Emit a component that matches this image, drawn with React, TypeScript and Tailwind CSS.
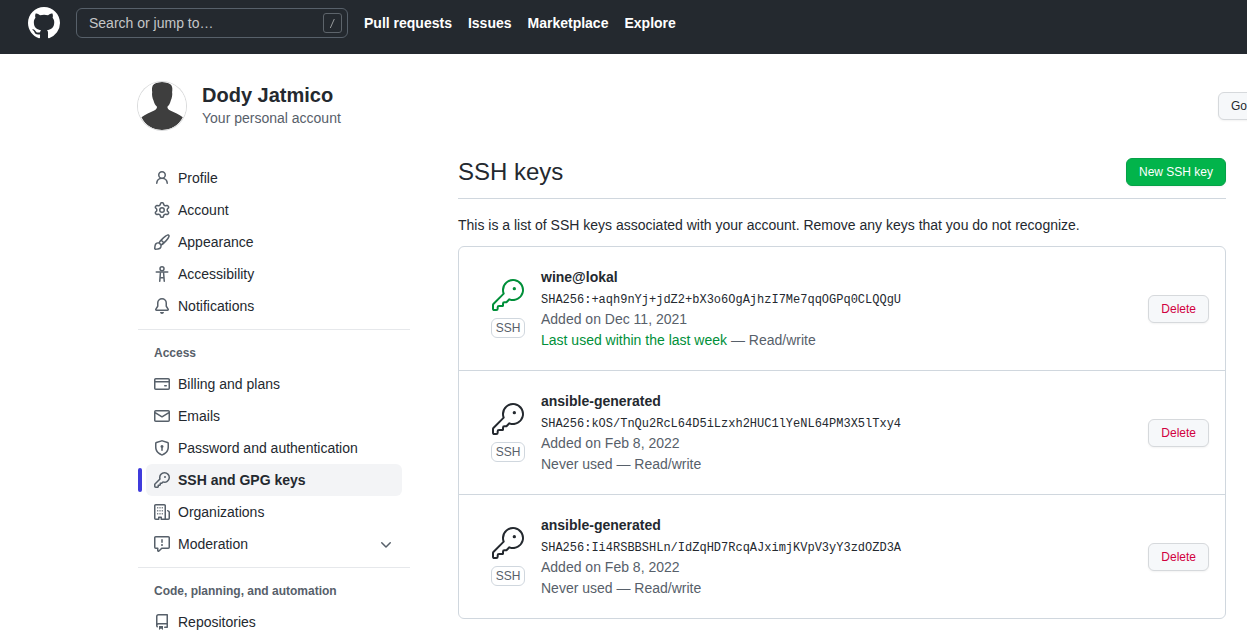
import React from "react";

type IconProps = { paths: string[]; size?: 16 | 24; className?: string };

function Icon({ paths, size = 16, className = "size-4" }: IconProps) {
  return (
    <svg viewBox={size === 24 ? "0 0 24 24" : "0 0 16 16"} fill="currentColor" fillRule="evenodd" aria-hidden="true" className={`shrink-0 ${className}`}>
      {paths.map((d) => (
        <path key={d} d={d} />
      ))}
    </svg>
  );
}

const icons = {
  mark: ["M8 0C3.58 0 0 3.58 0 8c0 3.54 2.29 6.53 5.47 7.59.4.07.55-.17.55-.38 0-.19-.01-.82-.01-1.49-2.01.37-2.53-.49-2.69-.94-.09-.23-.48-.94-.82-1.13-.28-.15-.68-.52-.01-.53.63-.01 1.08.58 1.23.82.72 1.21 1.87.87 2.33.66.07-.52.28-.87.51-1.07-1.78-.2-3.64-.89-3.64-3.95 0-.87.31-1.59.82-2.15-.08-.2-.36-1.02.08-2.12 0 0 .67-.21 2.2.82.64-.18 1.32-.27 2-.27.68 0 1.36.09 2 .27 1.53-1.04 2.2-.82 2.2-.82.44 1.1.16 1.92.08 2.12.51.56.82 1.27.82 2.15 0 3.07-1.87 3.75-3.65 3.95.29.25.54.73.54 1.48 0 1.07-.01 1.93-.01 2.2 0 .21.15.46.55.38A8.013 8.013 0 0016 8c0-4.42-3.58-8-8-8z"],
  person: ["M10.5 5a2.5 2.5 0 11-5 0 2.5 2.5 0 015 0zm.061 3.073a4 4 0 10-5.123 0 6.004 6.004 0 00-3.431 5.142.75.75 0 001.498.07 4.5 4.5 0 018.99 0 .75.75 0 101.498-.07 6.005 6.005 0 00-3.432-5.142z"],
  gear: ["M7.429 1.525a6.593 6.593 0 011.142 0c.036.003.108.036.137.146l.289 1.105c.147.56.55.967.997 1.189.174.086.341.183.501.29.417.278.97.423 1.53.27l1.102-.303c.11-.03.175.016.195.046.219.31.41.641.573.989.014.031.022.11-.059.19l-.815.806c-.411.406-.562.957-.53 1.456a4.588 4.588 0 010 .582c-.032.499.119 1.05.53 1.456l.815.806c.08.08.073.159.059.19a6.494 6.494 0 01-.573.99c-.02.029-.086.074-.195.045l-1.103-.303c-.559-.153-1.112-.008-1.529.27-.16.107-.327.204-.5.29-.449.222-.851.628-.998 1.189l-.289 1.105c-.029.11-.101.143-.137.146a6.613 6.613 0 01-1.142 0c-.036-.003-.108-.037-.137-.146l-.289-1.105c-.147-.56-.55-.967-.997-1.189a4.502 4.502 0 01-.501-.29c-.417-.278-.97-.423-1.53-.27l-1.102.303c-.11.03-.175-.016-.195-.046a6.492 6.492 0 01-.573-.989c-.014-.031-.022-.11.059-.19l.815-.806c.411-.406.562-.957.53-1.456a4.587 4.587 0 010-.582c.032-.499-.119-1.05-.53-1.456l-.815-.806c-.08-.08-.073-.159-.059-.19a6.44 6.44 0 01.573-.99c.02-.029.086-.075.195-.045l1.103.303c.559.153 1.112.008 1.529-.27.16-.107.327-.204.5-.29.449-.222.851-.628.998-1.189l.289-1.105c.029-.11.101-.143.137-.146zM8 0c-.236 0-.47.01-.701.03-.743.065-1.29.615-1.458 1.261l-.29 1.106c-.017.066-.078.158-.211.224a5.994 5.994 0 00-.668.386c-.123.082-.233.09-.3.071L3.27 2.776c-.644-.177-1.392.02-1.82.63a7.977 7.977 0 00-.704 1.217c-.315.675-.111 1.422.363 1.891l.815.806c.05.048.098.147.088.294a6.084 6.084 0 000 .772c.01.147-.038.246-.088.294l-.815.806c-.474.469-.678 1.216-.363 1.891.2.428.436.835.704 1.218.428.609 1.176.806 1.82.63l1.103-.303c.066-.019.176-.011.299.071.213.143.436.272.668.386.133.066.194.158.212.224l.289 1.106c.169.646.715 1.196 1.458 1.26a8.094 8.094 0 001.402 0c.743-.064 1.29-.614 1.458-1.26l.29-1.106c.017-.066.078-.158.211-.224a5.98 5.98 0 00.668-.386c.123-.082.233-.09.3-.071l1.102.302c.644.177 1.392-.02 1.82-.63.268-.382.505-.789.704-1.217.315-.675.111-1.422-.364-1.891l-.814-.806c-.05-.048-.098-.147-.088-.294a6.1 6.1 0 000-.772c-.01-.147.039-.246.088-.294l.814-.806c.475-.469.679-1.216.364-1.891a7.992 7.992 0 00-.704-1.218c-.428-.609-1.176-.806-1.82-.63l-1.103.303c-.066.019-.176.011-.299-.071a5.991 5.991 0 00-.668-.386c-.133-.066-.194-.158-.212-.224L10.16 1.29C9.99.645 9.444.095 8.701.031A8.094 8.094 0 008 0zm1.5 8a1.5 1.5 0 11-3 0 1.5 1.5 0 013 0zM11 8a3 3 0 11-6 0 3 3 0 016 0z"],
  brush: ["M11.134 1.535C9.722 2.562 8.16 4.057 6.889 5.312 5.8 6.387 5.041 7.401 4.575 8.294a3.745 3.745 0 00-3.227 1.054c-.43.431-.69 1.066-.86 1.657a11.982 11.982 0 00-.358 1.914A21.263 21.263 0 000 15.203v.054l.75-.007-.007.75h.054a14.404 14.404 0 00.654-.012 21.243 21.243 0 001.63-.118c.62-.07 1.3-.18 1.914-.357.592-.17 1.226-.43 1.657-.861a3.745 3.745 0 001.055-3.217c.908-.461 1.942-1.216 3.04-2.3 1.279-1.262 2.764-2.825 3.775-4.249.501-.706.923-1.428 1.125-2.096.2-.659.235-1.469-.368-2.07-.606-.607-1.42-.55-2.069-.34-.66.213-1.376.646-2.076 1.155zm-3.95 8.48a3.76 3.76 0 00-1.19-1.192 9.758 9.758 0 011.161-1.607l1.658 1.658a9.853 9.853 0 01-1.63 1.142zM12.016 2.749c-1.224.89-2.605 2.189-3.822 3.384l1.718 1.718c1.21-1.205 2.51-2.597 3.387-3.833.47-.662.78-1.227.912-1.662.134-.444.032-.551.009-.575h-.001V1.78c-.014-.014-.112-.113-.548.027-.432.14-.995.462-1.655.942zM1.62 13.089a19.56 19.56 0 00-.104 1.395 19.55 19.55 0 001.396-.104 10.528 10.528 0 001.668-.309c.526-.151.856-.325 1.011-.48a2.25 2.25 0 00-3.182-3.182c-.155.155-.329.485-.48 1.01a10.515 10.515 0 00-.309 1.67z"],
  accessibility: [
    "M8 0a2.75 2.75 0 110 5.5A2.75 2.75 0 018 0zm0 1.5a1.25 1.25 0 100 2.5 1.25 1.25 0 000-2.5z",
    "M2.25 5.25h11.5a.75.75 0 010 1.5H2.25a.75.75 0 010-1.5z",
    "M5.7 6.25h1.5l-.7 9.05a.75.75 0 01-1.5-.1z",
    "M10.3 6.25H8.8l.7 9.05a.75.75 0 001.5-.1z",
    "M6.200 11h3.600v1.500h-3.600z",
  ],
  bell: [
    "M8 16a2 2 0 001.985-1.75c.017-.137-.097-.25-.235-.25h-3.5c-.138 0-.252.113-.235.25A2 2 0 008 16z",
    "M8 1.5A3.5 3.5 0 004.5 5v2.947c0 .346-.102.683-.294.97l-1.703 2.556a.018.018 0 00-.003.01l.001.006c0 .002.002.004.004.006a.017.017 0 00.006.004l.007.001h10.964l.007-.001a.016.016 0 00.006-.004.016.016 0 00.004-.006l.001-.007a.017.017 0 00-.003-.01l-1.703-2.554a1.75 1.75 0 01-.294-.97V5A3.5 3.5 0 008 1.5zM3 5a5 5 0 0110 0v2.947c0 .05.015.098.042.139l1.703 2.555A1.518 1.518 0 0113.482 13H2.518a1.518 1.518 0 01-1.263-2.36l1.703-2.554A.25.25 0 003 7.947V5z",
  ],
  card: [
    "M10.75 9a.75.75 0 000 1.5h1.5a.75.75 0 000-1.5h-1.5z",
    "M0 3.75C0 2.784.784 2 1.75 2h12.5c.966 0 1.75.784 1.75 1.75v8.5A1.75 1.75 0 0114.25 14H1.75A1.75 1.75 0 010 12.25v-8.5zm14.5 0V5h-13V3.75a.25.25 0 01.25-.25h12.5a.25.25 0 01.25.25zm0 2.75h-13v5.75c0 .138.112.25.25.25h12.5a.25.25 0 00.25-.25V6.5z",
  ],
  mail: ["M1.75 2A1.75 1.75 0 000 3.75v8.5C0 13.216.784 14 1.75 14h12.5A1.75 1.75 0 0016 12.25v-8.5A1.75 1.75 0 0014.25 2H1.75zM14.5 4.07v-.32a.25.25 0 00-.25-.25H1.75a.25.25 0 00-.25.25v.32L8 7.88l6.5-3.81zm-13 1.74v6.441c0 .138.112.25.25.25h12.5a.25.25 0 00.25-.25V5.809L8.38 9.397a.75.75 0 01-.76 0L1.5 5.809z"],
  shield: ["M7.467.133a1.75 1.75 0 011.066 0l5.25 1.68A1.75 1.75 0 0115 3.48V7c0 1.566-.32 3.182-1.303 4.682-.983 1.498-2.585 2.813-5.032 3.855a1.7 1.7 0 01-1.33 0c-2.447-1.042-4.049-2.357-5.032-3.855C1.32 10.182 1 8.566 1 7V3.48a1.75 1.75 0 011.217-1.667l5.25-1.68zm.61 1.429a.25.25 0 00-.153 0l-5.25 1.68a.25.25 0 00-.174.238V7c0 1.358.275 2.666 1.057 3.86.784 1.194 2.121 2.34 4.366 3.297a.2.2 0 00.154 0c2.245-.956 3.582-2.104 4.366-3.298C13.225 9.666 13.5 8.36 13.5 7V3.48a.25.25 0 00-.174-.237l-5.25-1.68zM9.5 6.5a1.5 1.5 0 01-.75 1.3v2.45a.75.75 0 01-1.5 0V7.8A1.5 1.5 0 119.5 6.5z"],
  key: ["M6.5 5.5a4 4 0 112.731 3.795.75.75 0 00-.768.18L7.44 10.5H6.25a.75.75 0 00-.75.75v1.19l-.06.06H4.25a.75.75 0 00-.75.75v1.19l-.06.06H1.75a.25.25 0 01-.25-.25v-1.69l5.024-5.023a.75.75 0 00.181-.768A3.995 3.995 0 016.5 5.5zm4-5.5a5.5 5.5 0 00-5.348 6.788L.22 11.72a.75.75 0 00-.22.53v2C0 15.216.784 16 1.75 16h2a.75.75 0 00.53-.22l.5-.5a.75.75 0 00.22-.53V14h.75a.75.75 0 00.53-.22l.5-.5a.75.75 0 00.22-.53V12h.75a.75.75 0 00.53-.22l.932-.932A5.5 5.5 0 1010.5 0zm.5 6a1 1 0 100-2 1 1 0 000 2z"],
  organization: ["M1.5 14.25c0 .138.112.25.25.25H4v-1.25a.75.75 0 01.75-.75h2.5a.75.75 0 01.75.75v1.25h2.25a.25.25 0 00.25-.25V1.75a.25.25 0 00-.25-.25h-8.5a.25.25 0 00-.25.25v12.5zM1.75 16A1.75 1.75 0 010 14.25V1.75C0 .784.784 0 1.75 0h8.5C11.216 0 12 .784 12 1.75v12.5c0 .085-.006.168-.018.25h2.268a.25.25 0 00.25-.25V8.285a.25.25 0 00-.111-.208l-1.055-.703a.75.75 0 11.832-1.248l1.055.703c.487.325.779.871.779 1.456v5.965A1.75 1.75 0 0114.25 16h-3.5a.75.75 0 01-.197-.026c-.099.017-.2.026-.303.026h-3a.75.75 0 01-.75-.75V14h-1v1.25a.75.75 0 01-.75.75h-3z",
    "M3.25 3h1v1.5h-1zM5.5 3h1v1.5h-1zM7.75 3h1v1.5h-1zM3.25 6h1v1.5h-1zM5.5 6h1v1.5h-1zM7.75 6h1v1.5h-1zM3.25 9h1v1.5h-1zM5.5 9h1v1.5h-1zM7.75 9h1v1.5h-1z"],
  report: ["M1.75 1.5a.25.25 0 00-.25.25v9.5c0 .138.112.25.25.25h2a.75.75 0 01.75.75v2.19l2.72-2.72a.75.75 0 01.53-.22h6.5a.25.25 0 00.25-.25v-9.5a.25.25 0 00-.25-.25H1.75zM0 1.75C0 .784.784 0 1.75 0h12.5C15.216 0 16 .784 16 1.75v9.5A1.75 1.75 0 0114.25 13H8.06l-2.573 2.573A1.457 1.457 0 013 14.543V13H1.75A1.75 1.75 0 010 11.25v-9.5zM9 9a1 1 0 11-2 0 1 1 0 012 0zm-.25-5.25a.75.75 0 00-1.5 0v2.5a.75.75 0 001.5 0v-2.5z"],
  repo: ["M2 2.5A2.5 2.5 0 014.5 0h8.75a.75.75 0 01.75.75v12.5a.75.75 0 01-.75.75h-2.5a.75.75 0 110-1.5h1.75v-2h-8a1 1 0 00-.714 1.7.75.75 0 01-1.072 1.05A2.495 2.495 0 012 11.5v-9zm10.5-1V9h-8c-.356 0-.694.074-1 .208V2.5a1 1 0 011-1h8zM5 12.25v3.25a.25.25 0 00.4.2l1.45-1.087a.25.25 0 01.3 0L8.6 15.7a.25.25 0 00.4-.2v-3.25a.25.25 0 00-.25-.25h-3.5a.25.25 0 00-.25.25z"],
  chevron: ["M12.78 6.22a.75.75 0 010 1.06l-4.25 4.25a.75.75 0 01-1.06 0L3.22 7.28a.75.75 0 011.06-1.06L8 9.94l3.72-3.72a.75.75 0 011.06 0z"],
  keyLarge: [
    "M16.75 8.5a1.25 1.25 0 100-2.5 1.25 1.25 0 000 2.5z",
    "M15.75 0a8.25 8.25 0 00-7.851 10.79L.513 18.178A1.75 1.75 0 000 19.414v2.836C0 23.217.784 24 1.75 24h1.5A1.75 1.75 0 005 22.25v-1a.25.25 0 01.25-.25h2.735a.75.75 0 00.545-.22l.214-.213A.875.875 0 009 19.948V18.5a.25.25 0 01.25-.25h1.086c.464 0 .91-.184 1.237-.513l1.636-1.636A8.25 8.25 0 1015.75 0zM9 8.25a6.75 6.75 0 114.288 6.287.75.75 0 00-.804.168l-1.971 1.972a.25.25 0 01-.177.073H9.25A1.75 1.75 0 007.5 18.5v1H5.25a1.75 1.75 0 00-1.75 1.75v1a.25.25 0 01-.25.25h-1.5a.25.25 0 01-.25-.25v-2.836a.25.25 0 01.073-.177l7.722-7.721a.75.75 0 00.168-.804A6.73 6.73 0 019 8.25z",
  ],
};

type NavEntry = { label: string; icon: string[]; active?: boolean; expandable?: boolean };
type NavGroup = { title?: string; items: NavEntry[] };

const groups: NavGroup[] = [
  {
    items: [
      { label: "Profile", icon: icons.person },
      { label: "Account", icon: icons.gear },
      { label: "Appearance", icon: icons.brush },
      { label: "Accessibility", icon: icons.accessibility },
      { label: "Notifications", icon: icons.bell },
    ],
  },
  {
    title: "Access",
    items: [
      { label: "Billing and plans", icon: icons.card },
      { label: "Emails", icon: icons.mail },
      { label: "Password and authentication", icon: icons.shield },
      { label: "SSH and GPG keys", icon: icons.key, active: true },
      { label: "Organizations", icon: icons.organization },
      { label: "Moderation", icon: icons.report, expandable: true },
    ],
  },
  {
    title: "Code, planning, and automation",
    items: [{ label: "Repositories", icon: icons.repo }],
  },
];

const sshKeys = [
  { id: 1, name: "wine@lokal", hash: "SHA256:+aqh9nYj+jdZ2+bX3o6OgAjhzI7Me7qqOGPq0CLQQgU", added: "Added on Dec 11, 2021", used: "Last used within the last week", recent: true },
  { id: 2, name: "ansible-generated", hash: "SHA256:kOS/TnQu2RcL64D5iLzxh2HUC1lYeNL64PM3X5lTxy4", added: "Added on Feb 8, 2022", used: "Never used", recent: false },
  { id: 3, name: "ansible-generated", hash: "SHA256:Ii4RSBBSHLn/IdZqHD7RcqAJximjKVpV3yY3zdOZD3A", added: "Added on Feb 8, 2022", used: "Never used", recent: false },
];

function TopBar() {
  return (
    <header className="flex items-center gap-4 bg-[#24292f] px-7 pt-[7px] pb-[15px] text-white">
      <a href="#" aria-label="Homepage">
        <Icon paths={icons.mark} className="size-8" />
      </a>
      <div className="flex h-[30px] w-[272px] items-center rounded-md border border-[#57606a] pr-[5px] pl-3">
        <input type="text" aria-label="Search or jump to" placeholder="Search or jump to…" className="min-w-0 flex-1 bg-transparent outline-none placeholder:text-[#c4c6c8]" />
        <svg viewBox="0 0 19 20" className="h-5 w-[19px] shrink-0" fill="none" stroke="#5d646b" aria-hidden="true">
          <rect x="0.5" y="0.5" width="18" height="19" rx="2.5" />
          <path d="M11.3 6 7.300 15" stroke="#979a9c" />
        </svg>
      </div>
      <nav className="flex gap-4 font-bold">
        <a href="#">Pull requests</a>
        <a href="#">Issues</a>
        <a href="#">Marketplace</a>
        <a href="#">Explore</a>
      </nav>
    </header>
  );
}

function Avatar() {
  return (
    <svg viewBox="0 0 48 48" className="size-12 shrink-0 rounded-full ring-1 ring-[#d9dadb]" role="img" aria-label="Dody Jatmico">
      <rect width="48" height="48" fill="#fff" />
      <path
        fill="#3e3e3e"
        d="M24 0c-4.500 0-7.800 1.200-9.200 3.600-1 1.800-.9 4-.6 6.600-.5 2 .1 6 1.300 8.300.8 3 1.800 4.600 3.500 6.300.1 1.500-.8 2.700-2.800 3.700C12 30.600 7.500 32.300 3.500 35.200 7 43 14.500 48 24 48s17-5 20.800-12.800C41 32.300 36.500 30.600 32.200 28.500c-2-1-2.900-2.200-2.800-3.700 1.700-1.700 2.600-3.300 3.400-6.300 1.200-2.300 1.800-6.300 1.300-8.300.4-2.600.4-4.800-.6-6.600C32 1.200 28.500 0 24 0z"
      />
    </svg>
  );
}

function Sidebar() {
  return (
    <nav aria-label="Settings" className="w-[272px] shrink-0 pt-2">
      {groups.map((group, index) => (
        <div key={group.title ?? "general"} className={index > 0 ? "mt-[7px] border-t border-[#e6e8eb] pt-2" : ""}>
          {group.title && <h2 className="px-4 py-[6px] text-xs leading-[18px] font-bold text-[#57606a]">{group.title}</h2>}
          <ul>
            {group.items.map((item) => (
              <li key={item.label} className="flex items-center gap-1 pr-2">
                <span className={item.active ? "h-6 w-1 rounded-md bg-[#3f3bdc]" : "w-1"} />
                <a
                  href="#"
                  aria-current={item.active ? "page" : undefined}
                  className={`flex h-8 flex-1 items-center gap-2 rounded-md px-2 ${item.active ? "bg-[#f3f4f6] font-bold" : ""}`}
                >
                  <Icon paths={item.icon} className="size-4 text-[#57606a]" />
                  <span className="flex-1">{item.label}</span>
                  {item.expandable && <Icon paths={icons.chevron} className="size-4 text-[#57606a]" />}
                </a>
              </li>
            ))}
          </ul>
        </div>
      ))}
    </nav>
  );
}

function KeyRow({ item }: { item: (typeof sshKeys)[number] }) {
  return (
    <li className="flex items-center gap-4 border-b border-[#d0d7de] pt-5 pr-4 pb-[19px] pl-8 last:border-b-0">
      <div className="flex w-[34px] flex-col items-center gap-[7px] pb-px">
        <Icon paths={icons.keyLarge} size={24} className={item.recent ? "size-8 text-[#008f39]" : "size-8"} />
        <span className="w-full rounded-md border border-[#d0d7de] text-center text-xs leading-[18px] text-[#57606a]">SSH</span>
      </div>
      <div className="min-w-0 flex-1 text-[#57606a]">
        <h3 className="font-bold text-[#24292f]">{item.name}</h3>
        <div className="h-[21px]">
          <code className="font-['Liberation_Mono',monospace] text-xs leading-[21px] text-[#24292f]">{item.hash}</code>
        </div>
        <p>{item.added}</p>
        <p>
          <span className={item.recent ? "text-[#008f39]" : ""}>{item.used}</span> — Read/write
        </p>
      </div>
      <button type="button" className="h-7 rounded-md border border-[#d6d9dc] bg-[#f6f8fa] px-3 text-xs text-[#d1003f] shadow-xs">
        Delete
      </button>
    </li>
  );
}

export default function App() {
  return (
    <div className="min-h-screen overflow-x-hidden bg-white font-['Liberation_Sans',Arial,sans-serif] text-[14px] leading-[21px] text-[#24292f]">
      <TopBar />
      <div className="flex items-center gap-4 pt-7 pl-[138px]">
        <Avatar />
        <div className="flex-1">
          <h1 className="text-xl leading-[25px] font-bold">Dody Jatmico</h1>
          <p className="text-[#57606a]">Your personal account</p>
        </div>
        <div className="w-[29px] shrink-0">
          <a href="#" className="inline-flex h-7 items-center rounded-md border border-[#d6d9dc] bg-[#f6f8fa] px-3 text-xs whitespace-nowrap shadow-xs">
            Go to your personal profile
          </a>
        </div>
      </div>
      <div className="flex gap-12 pt-6 pr-[21px] pl-[138px]">
        <Sidebar />
        <main className="min-w-0 flex-1">
          <div className="flex items-center justify-between border-b border-[#d0d7de] pb-2">
            <h2 className="text-2xl leading-9">SSH keys</h2>
            <button type="button" className="h-7 rounded-md border border-[#06a148] bg-[#02b44b] px-3 text-xs text-white shadow-xs">
              New SSH key
            </button>
          </div>
          <p className="mt-4 mb-[10px]">This is a list of SSH keys associated with your account. Remove any keys that you do not recognize.</p>
          <ul className="rounded-md border border-[#d0d7de]">
            {sshKeys.map((item) => (
              <KeyRow key={item.id} item={item} />
            ))}
          </ul>
        </main>
      </div>
    </div>
  );
}
